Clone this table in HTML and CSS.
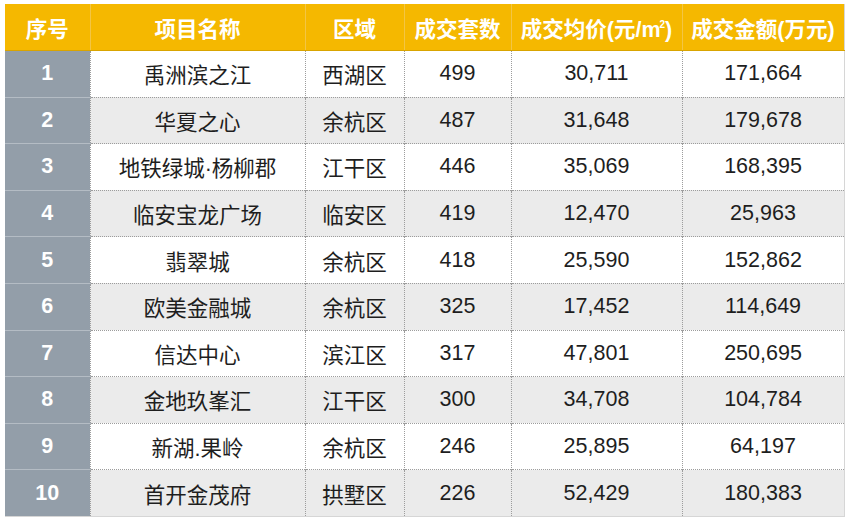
FILE: index.html
```html
<!DOCTYPE html>
<html lang="zh">
<head>
<meta charset="utf-8">
<link rel="stylesheet" href="styles.css">
</head>
<body>
<table class="rank">
  <colgroup>
    <col class="c1"><col class="c2"><col class="c3"><col class="c4"><col class="c5"><col class="c6">
  </colgroup>
  <thead>
    <tr><th>序号</th><th>项目名称</th><th>区域</th><th>成交套数</th><th>成交均价(元/m<sup>2</sup>)</th><th>成交金额(万元)</th></tr>
  </thead>
  <tbody>
    <tr><td class="no">1</td><td>禹洲滨之江</td><td>西湖区</td><td>499</td><td>30,711</td><td>171,664</td></tr>
    <tr><td class="no">2</td><td>华夏之心</td><td>余杭区</td><td>487</td><td>31,648</td><td>179,678</td></tr>
    <tr><td class="no">3</td><td>地铁绿城·杨柳郡</td><td>江干区</td><td>446</td><td>35,069</td><td>168,395</td></tr>
    <tr><td class="no">4</td><td>临安宝龙广场</td><td>临安区</td><td>419</td><td>12,470</td><td>25,963</td></tr>
    <tr><td class="no">5</td><td>翡翠城</td><td>余杭区</td><td>418</td><td>25,590</td><td>152,862</td></tr>
    <tr><td class="no">6</td><td>欧美金融城</td><td>余杭区</td><td>325</td><td>17,452</td><td>114,649</td></tr>
    <tr><td class="no">7</td><td>信达中心</td><td>滨江区</td><td>317</td><td>47,801</td><td>250,695</td></tr>
    <tr><td class="no">8</td><td>金地玖峯汇</td><td>江干区</td><td>300</td><td>34,708</td><td>104,784</td></tr>
    <tr><td class="no">9</td><td>新湖.果岭</td><td>余杭区</td><td>246</td><td>25,895</td><td>64,197</td></tr>
    <tr><td class="no">10</td><td>首开金茂府</td><td>拱墅区</td><td>226</td><td>52,429</td><td>180,383</td></tr>
  </tbody>
</table>
</body>
</html>
```
FILE: styles.css
```css
html, body {
  margin: 0;
  padding: 0;
  background: #ffffff;
}
body {
  padding: 4px 0 0 5px;
  font-family: "Liberation Sans", "Noto Sans CJK SC", sans-serif;
}
.rank {
  border-collapse: collapse;
  table-layout: fixed;
  width: 839px;
  border-right: 1px solid #d6d6d6;
  border-bottom: 1px solid #d6d6d6;
}
.c1 { width: 85px; }
.c2 { width: 215px; }
.c3 { width: 99px; }
.c4 { width: 107px; }
.c5 { width: 171px; }
.c6 { width: 162px; }
.rank th {
  height: 46px;
  padding: 0;
  background: #f5b800;
  color: #ffffff;
  font-size: 21.5px;
  font-weight: bold;
  text-align: center;
  white-space: nowrap;
  border-left: 1px solid #f3c544;
  border-bottom: 1px solid #d9a400;
}
.rank th:first-child { border-left: none; }
.rank th sup {
  font-size: 10px;
  vertical-align: 9px;
  line-height: 0;
  margin-left: -1px;
}
.rank td {
  height: 45.6px;
  padding: 0;
  font-size: 21.5px;
  color: #1e1e1e;
  text-align: center;
  border-left: 1px dotted #9c9c9c;
  border-top: 1px dotted #9c9c9c;
}
.rank tbody tr:nth-child(even) td { background: #ebebeb; }
.rank tbody tr:first-child td { border-top: none; }
.rank td.no {
  background: #939ea9 !important;
  color: #ffffff;
  font-weight: bold;
  font-size: 21.5px;
  border-left: none;
  border-top: 1px solid #b4bcc4;
}
.rank tbody tr:first-child td.no { border-top: none; }
```
